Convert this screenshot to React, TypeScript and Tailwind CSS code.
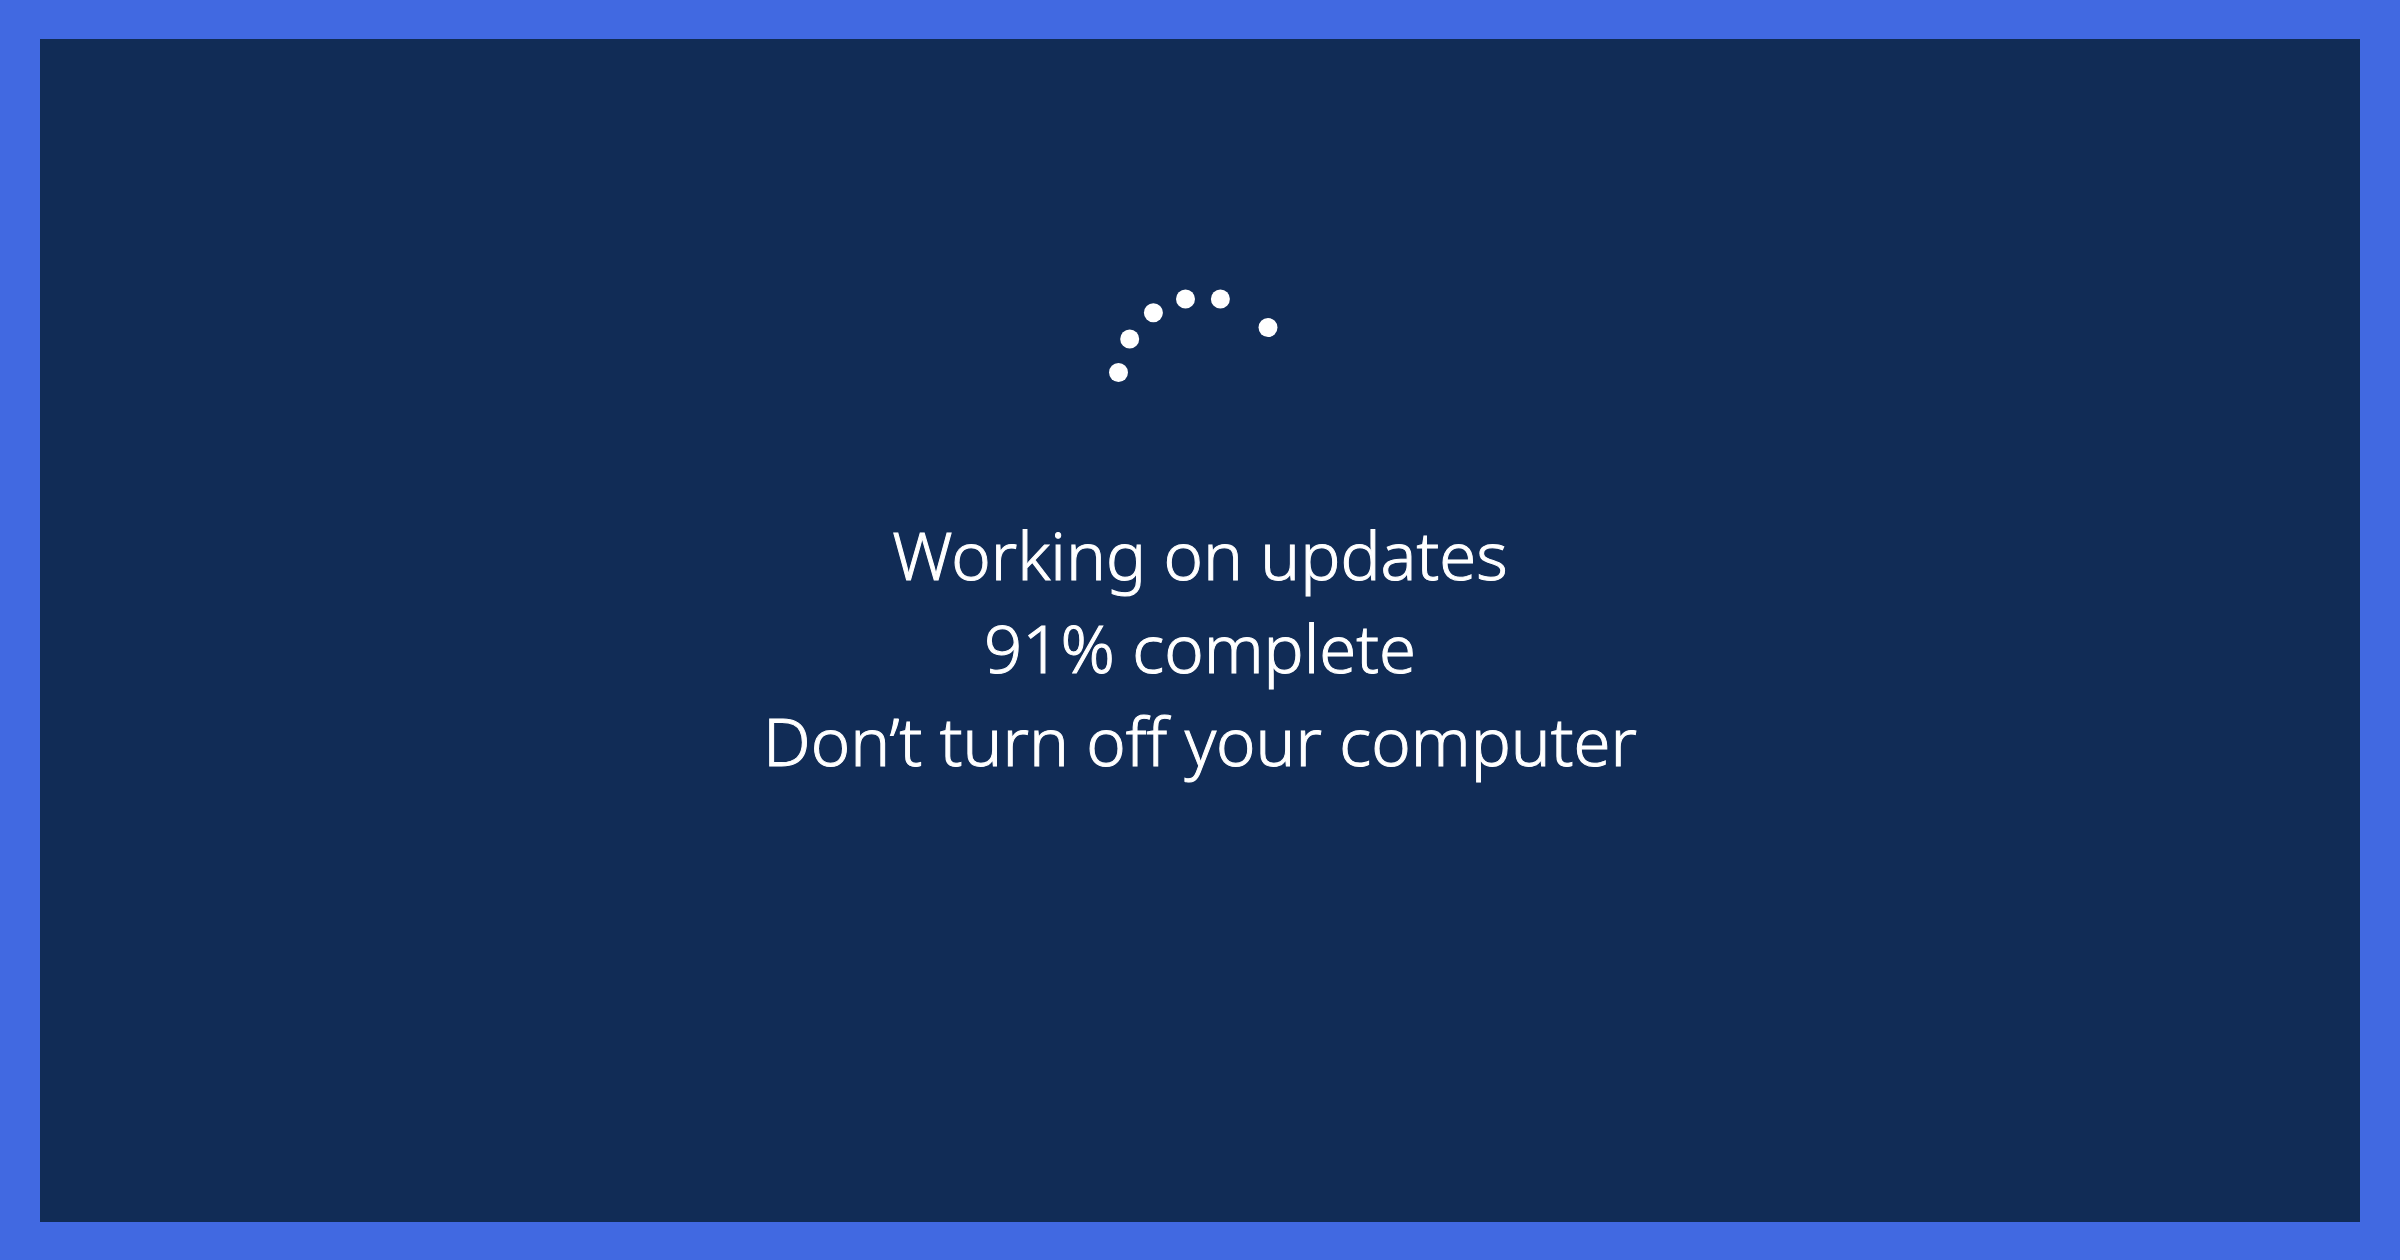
const dots = [
  { x: 1118.5, y: 372.5 },
  { x: 1129.7, y: 339 },
  { x: 1153.4, y: 312.7 },
  { x: 1185.5, y: 299 },
  { x: 1220.4, y: 299 },
  { x: 1268, y: 327.5 },
]

function Spinner() {
  return (
    <svg viewBox="1108 288 184 94" className="h-[94px] w-[184px] fill-white" role="img" aria-label="Loading">
      {dots.map((dot) => (
        <circle key={dot.x} cx={dot.x} cy={dot.y} r={9.5} />
      ))}
    </svg>
  )
}

export default function App() {
  return (
    <div className="flex min-h-screen bg-[#4169e1] px-10 pt-[39px] pb-[38px]">
      <main className="flex flex-1 flex-col items-center gap-[126px] bg-[#112c56] pt-[249px] text-white">
        <Spinner />
        <div className="text-center font-['Noto_Sans',sans-serif] text-[67px] leading-[93px] font-light [-webkit-text-stroke:1px_white]">
          <p>Working on updates</p>
          <p>91% complete</p>
          <p>Don’t turn off your computer</p>
        </div>
      </main>
    </div>
  )
}
